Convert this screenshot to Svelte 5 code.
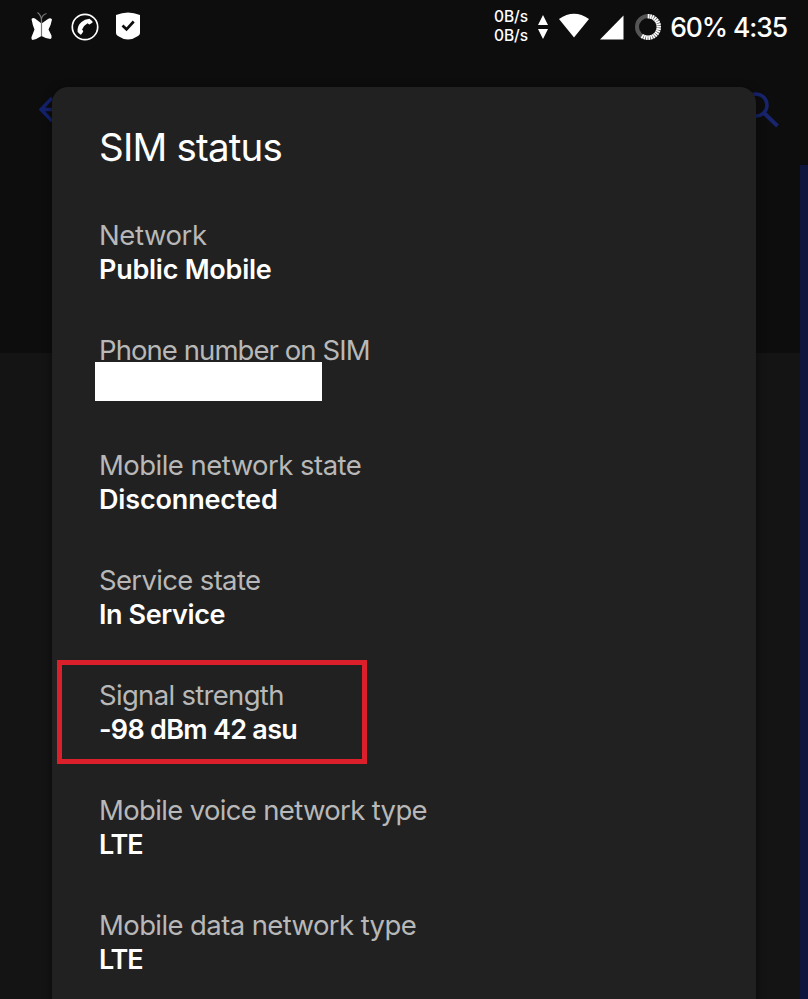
<script>
  const rows = [
    { label: 'Network', value: 'Public Mobile', labelGap: -0.42, valueGap: -0.25 },
    { label: 'Phone number on SIM', value: '', labelGap: -0.93, valueGap: 0, redacted: true },
    { label: 'Mobile network state', value: 'Disconnected', labelGap: -0.53, valueGap: -0.15 },
    { label: 'Service state', value: 'In Service', labelGap: -0.66, valueGap: -0.4 },
    { label: 'Signal strength', value: '-98 dBm 42 asu', labelGap: -0.69, valueGap: -0.72, marked: true },
    { label: 'Mobile voice network type', value: 'LTE', labelGap: -0.66, valueGap: -1.2 },
    { label: 'Mobile data network type', value: 'LTE', labelGap: -0.6, valueGap: -1.2 }
  ];

  // segments of the battery ring, clockwise from the top
  const ticks = Array.from({ length: 18 }, (_, i) => i * 12.2 + 3);
</script>

<div class="screen">
  <header class="statusbar">
    <div class="notifications">
      <svg class="butterfly" width="24" height="32" viewBox="0 0 24 32">
        <path d="M1.500 9Q3 7.500 5 8.500L11.500 13.500L18 9Q20.500 7.500 22 9.500Q21 15 18.500 19.500L21.500 25.500Q22 28 20.500 29Q15.500 28.500 11.500 26Q7 29 2.500 30Q1 29.500 1.500 27L4.500 19.500Q2.500 15 1.500 9Z" fill="#fff" />
        <path d="M11.500 26V10M11.500 10Q11 5 7.500 2.500M11.500 9Q12 5 16.500 3.500" stroke="#777" stroke-width="1.200" fill="none" />
      </svg>
      <svg class="call" width="28" height="28" viewBox="0 0 28 28">
        <circle cx="14" cy="14" r="12.700" fill="none" stroke="#fff" stroke-width="1.700" />
        <path d="M18.500 5.700L21.300 8.300Q22 9 21.300 9.700L18.800 11.300Q18.200 11.700 17.500 11L16.600 10.300Q12.500 12.500 11 16.700L11.900 17.500Q12.500 18.200 12 18.900L10.400 21.200Q9.800 22 9 21.300L6.600 19Q6 12.500 10.500 9Q13.500 6 18.500 5.700Z" fill="#fff" />
      </svg>
      <svg class="shield" width="26" height="28" viewBox="0 0 26 28">
        <path d="M1 3Q7 .5 13 .5Q19 .5 25 3V21Q25 23 23 24Q18 27.500 13 27.500Q8 27.500 3 24Q1 23 1 21Z" fill="#fff" />
        <path d="M7.500 13.500L11.500 17.300L18.700 9.500" fill="none" stroke="#0d0d0d" stroke-width="2.700" />
      </svg>
    </div>
    <div class="system">
      <div class="speed">
        <span>0B/s</span>
        <span>0B/s</span>
      </div>
      <svg class="arrows" width="12" height="26" viewBox="0 0 12 26">
        <path d="M6 1L11 11H1ZM1 15H11L6 25Z" fill="#fff" />
      </svg>
      <svg class="wifi" width="32" height="26" viewBox="0 0 32 26">
        <path d="M1 6Q16 -4.500 31 6L16 24.500Z" fill="#fff" />
      </svg>
      <svg class="cell" width="24" height="25" viewBox="0 0 24 25">
        <path d="M23.500 .5V24.500H0Z" fill="#fff" />
      </svg>
      <svg class="battery" width="28" height="28" viewBox="0 0 28 28">
        <circle cx="14" cy="14" r="11" fill="none" stroke="#555" stroke-width="4" />
        {#each ticks as angle}
          <path d="M14 1V5.500" stroke="#fff" stroke-width="1.700" transform="rotate({angle} 14 14)" />
        {/each}
      </svg>
      <span class="percent">60%</span>
      <span class="clock">4:35</span>
    </div>
  </header>

  <div class="toolbar">
    <svg class="back" width="28" height="28" viewBox="0 0 28 28">
      <path d="M14 2L3 13.500L14 25M3 13.500H27" fill="none" stroke="#14226d" stroke-width="3.300" />
    </svg>
    <svg class="search" width="38" height="38" viewBox="0 0 38 38">
      <circle cx="14" cy="14" r="11" fill="none" stroke="#18246c" stroke-width="3.500" />
      <path d="M22 22L35.500 35" stroke="#18246c" stroke-width="4" />
    </svg>
  </div>
  <div class="page"></div>
  <div class="scrollbar"></div>

  <section class="dialog">
    <h1>SIM status</h1>
    {#each rows as row}
      <div class="row" class:marked={row.marked}>
        <div class="label" style="letter-spacing: {row.labelGap}px">{row.label}</div>
        {#if row.redacted}
          <div class="redacted"></div>
        {:else}
          <div class="value" style="letter-spacing: {row.valueGap}px">{row.value}</div>
        {/if}
      </div>
    {/each}
  </section>
</div>

<style>
  :global(body) {
    background: #0d0d0d;
  }
  .screen {
    position: relative;
    display: flex;
    flex-direction: column;
    width: 808px;
    height: 999px;
    overflow: hidden;
    background: #0d0d0d;
    color: #fff;
    font-family: Inter, sans-serif;
  }
  svg {
    display: block;
    flex: none;
  }
  .statusbar {
    display: flex;
    justify-content: space-between;
    height: 54px;
    padding: 0 21px 0 30px;
  }
  .notifications,
  .system {
    display: flex;
    align-items: center;
  }
  .butterfly {
    margin-bottom: 2px;
  }
  .call {
    margin-left: 17px;
  }
  .shield {
    margin-left: 16px;
    margin-bottom: 2px;
  }
  .speed {
    display: flex;
    flex-direction: column;
    font-size: 15.500px;
    line-height: 19px;
    font-weight: 500;
    margin-right: 9px;
    margin-bottom: 2px;
  }
  .wifi {
    margin-left: 9px;
    margin-bottom: 2px;
  }
  .cell {
    margin-left: 10px;
  }
  .battery {
    margin-left: 10px;
  }
  .percent,
  .clock {
    font-size: 26.500px;
    font-weight: 500;
    line-height: 54px;
    letter-spacing: -1.1px;
  }
  .percent {
    margin-left: 8px;
  }
  .clock {
    margin-left: 6px;
  }
  .toolbar {
    display: flex;
    justify-content: space-between;
    height: 299px;
    padding: 0 28px 0 38px;
    box-sizing: border-box;
  }
  .back {
    margin-top: 42px;
  }
  .search {
    margin-top: 37px;
  }
  .page {
    flex: 1;
    background: #141414;
  }
  .scrollbar {
    position: absolute;
    top: 165px;
    right: 0;
    bottom: 0;
    width: 8px;
    background: #0e163e;
  }
  .dialog {
    position: absolute;
    top: 87px;
    left: 52px;
    width: 704px;
    height: 930px;
    box-sizing: border-box;
    padding: 36px 0 0 47px;
    border-radius: 16px;
    background: #212121;
    box-shadow: 0 2px 10px rgba(0, 0, 0, 0.5);
  }
  h1 {
    margin: 0 0 46px;
    font-size: 38.500px;
    line-height: 48px;
    font-weight: 400;
    letter-spacing: -0.8px;
  }
  .row {
    position: relative;
    height: 115px;
    white-space: nowrap;
  }
  .label {
    height: 36px;
    line-height: 36px;
    font-size: 27.500px;
    font-weight: 400;
    color: #b8b8b8;
  }
  .value {
    line-height: 34px;
    font-size: 27px;
    font-weight: 600;
  }
  /* covers the phone number and the foot of its label */
  .redacted {
    position: relative;
    width: 227px;
    height: 39px;
    margin: -6px 0 0 -4px;
    background: #fff;
  }
  /* callout drawn around the signal reading */
  .marked::after {
    content: '';
    position: absolute;
    top: -17px;
    left: -42px;
    width: 300px;
    height: 94px;
    border: 5px solid #dc202b;
  }
</style>
